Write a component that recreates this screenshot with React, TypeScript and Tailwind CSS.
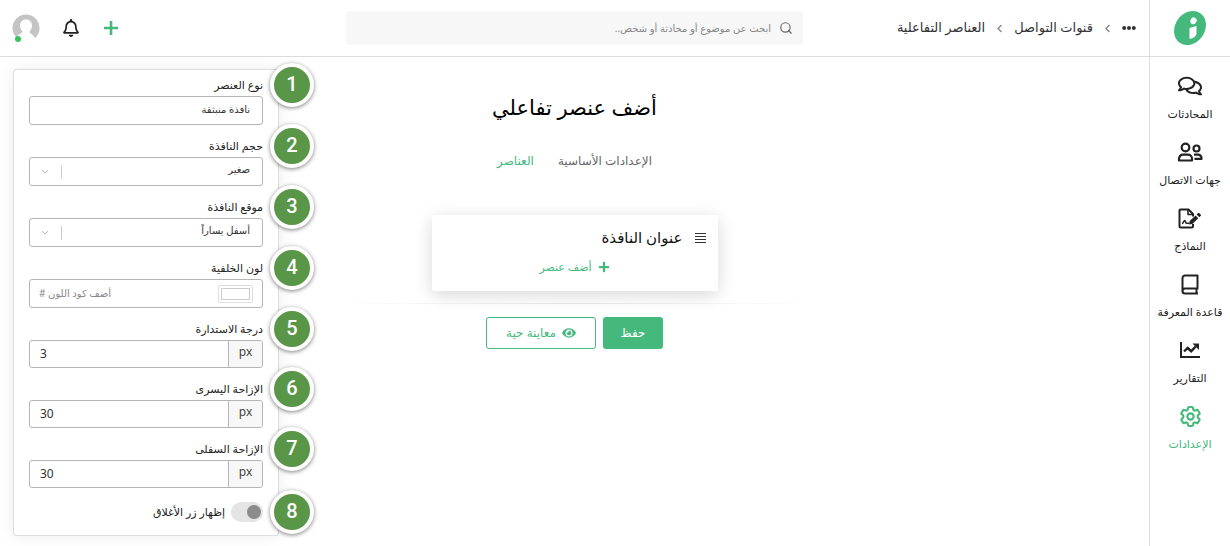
import React, { useState } from 'react';
import { Search } from 'lucide-react';
import { FaRegBell, FaRegComments, FaPlus, FaEye, FaChevronLeft, FaEllipsisH } from 'react-icons/fa';

interface NavItem {
  id: string;
  label: string;
  icon: React.ReactNode;
  active?: boolean;
}

interface FieldProps {
  id: string;
  step: number;
  label: string;
  children: React.ReactNode;
}

const Logo = () => (
  <svg viewBox="0 0 34 36" className="h-9 w-[34px]" aria-hidden="true">
    <ellipse cx="17" cy="18" rx="14.8" ry="18" transform="rotate(35 17 18)" fill="#45b97c" />
    <ellipse cx="20.5" cy="10.8" rx="3" ry="3.5" transform="rotate(25 20.5 10.8)" fill="#fff" />
    <path d="M16.5 18 23.5 16V23.5C23 26.5 20.5 28.5 16.5 29Z" fill="#fff" />
  </svg>
);

const UsersIcon = () => (
  <svg viewBox="0 0 26 20" className="h-5 w-[26px]" fill="none" stroke="currentColor" strokeWidth="2.2" strokeLinejoin="round" aria-hidden="true">
    <circle cx="8.5" cy="5.5" r="3.8" />
    <path d="M2 18.5v-1.8a4 4 0 0 1 4-4h5a4 4 0 0 1 4 4v1.8Z" />
    <circle cx="19.5" cy="6.5" r="3" />
    <path d="M17 12.6h4a3.5 3.5 0 0 1 3.5 3.5v.8h-7" />
  </svg>
);

const FormIcon = () => (
  <svg viewBox="0 0 24 21" className="h-[21px] w-6" fill="none" stroke="currentColor" strokeWidth="2" strokeLinejoin="round" aria-hidden="true">
    <path d="M15 8.5V6l-4.5-4.5H2.5a1 1 0 0 0-1 1v16a1 1 0 0 0 1 1H14a1 1 0 0 0 1-1V16" />
    <path d="M10 2v4.500h4.500" strokeWidth="1.6" />
    <path d="M4 15.5c1.500 0 1.700-3 2.700-3s.7 2.800 1.800 2.800H11" strokeWidth="1.6" />
    <path d="m11 16.500.6-3.500 6-5.600 2.700 2.800-5.900 5.700Z" fill="currentColor" stroke="none" />
    <path d="m18.600 6.500 1.300-1.200c.5-.5 1.200-.4 1.700.1l1 1c.5.500.5 1.200 0 1.700l-1.300 1.200Z" fill="currentColor" stroke="none" />
  </svg>
);

const BookIcon = () => (
  <svg viewBox="0 0 18 21" className="h-[21px] w-[18px]" fill="none" stroke="currentColor" strokeWidth="2" strokeLinejoin="round" aria-hidden="true">
    <path d="M16.500 14.500H4a2.500 2.500 0 0 0-2.500 2.500V4A2.500 2.500 0 0 1 4 1.500h12.500Z" />
    <path d="M1.500 17A2.500 2.500 0 0 0 4 19.500h13M15.500 14.500v5" />
  </svg>
);

const ChartIcon = () => (
  <svg viewBox="0 0 22 18" className="h-[18px] w-[22px]" fill="none" stroke="currentColor" strokeWidth="2" aria-hidden="true">
    <path d="M2 1v15h19" />
    <path d="m5 10.500 3.700-3.500 3.500 3.200 4.500-4.700" strokeWidth="2.400" />
    <path d="M13.500 2.500H20v6.500Z" fill="currentColor" stroke="none" />
  </svg>
);

const GearIcon = () => (
  <svg viewBox="2 2 20 20" className="h-[21px] w-[21px]" fill="none" stroke="currentColor" strokeWidth="2" strokeLinejoin="round" aria-hidden="true">
    <path d="M9.600 3.900c.1-.5.500-.9 1.100-.9h2.600c.6 0 1 .4 1.100.9l.2 1.300c.1.400.3.700.6.900l.3.100c.3.200.7.200 1.100.1l1.200-.5c.5-.2 1.100 0 1.400.5l1.300 2.200c.3.500.2 1.100-.3 1.400l-1 .8c-.3.300-.4.600-.4 1v.6c0 .4.100.7.400 1l1 .8c.5.300.6.900.3 1.400l-1.300 2.200c-.3.500-.9.700-1.400.5l-1.200-.5c-.4-.1-.8-.1-1.100.1l-.3.100c-.3.200-.5.500-.6.900l-.2 1.300c-.1.500-.5.900-1.100.9h-2.600c-.6 0-1-.4-1.100-.9l-.2-1.300c-.1-.4-.3-.7-.6-.9l-.3-.1c-.3-.2-.7-.2-1.100-.1l-1.200.5c-.5.200-1.100 0-1.400-.5l-1.300-2.200c-.3-.5-.2-1.100.3-1.400l1-.8c.3-.3.400-.6.400-1v-.6c0-.4-.1-.7-.4-1l-1-.8c-.5-.3-.6-.9-.3-1.400l1.300-2.200c.3-.5.900-.7 1.400-.5l1.200.5c.4.100.8.100 1.100-.1l.3-.1c.3-.2.5-.5.6-.9Z" />
    <circle cx="12" cy="12" r="3" />
  </svg>
);

const navItems: NavItem[] = [
  { id: 'chats', label: 'المحادثات', icon: <FaRegComments size={24} /> },
  { id: 'contacts', label: 'جهات الاتصال', icon: <UsersIcon /> },
  { id: 'forms', label: 'النماذج', icon: <FormIcon /> },
  { id: 'kb', label: 'قاعدة المعرفة', icon: <BookIcon /> },
  { id: 'reports', label: 'التقارير', icon: <ChartIcon /> },
  { id: 'settings', label: 'الإعدادات', icon: <GearIcon />, active: true },
];

const StepBadge = ({ step }: { step: number }) => (
  <span className="absolute -top-[11px] -right-[51px] flex h-11 w-11 items-center justify-center rounded-full border-4 border-white bg-[#5a9647] pb-[2px] font-['Roboto','Liberation_Sans',sans-serif] text-xl font-medium text-white shadow-[0_1px_4px_rgba(0,0,0,0.5)]">
    {step}
  </span>
);

const Field: React.FC<FieldProps> = ({ id, step, label, children }) => (
  <div className="relative mb-[10px]">
    <label htmlFor={id} className="block text-[11px] leading-[22px] text-[#222]">{label}</label>
    {children}
    <StepBadge step={step} />
  </div>
);

const SelectBox = ({ id, value }: { id: string; value: string }) => (
  <div className="relative">
    <select id={id} className="block h-[29px] w-full appearance-none rounded-[3px] border border-[#b5b5b5] bg-white px-3 pb-1 text-[10px] text-[#333]">
      <option>{value}</option>
    </select>
    <span className="pointer-events-none absolute inset-y-0 left-3 flex items-center gap-3">
      <span className="h-[14px] w-px bg-[#ccc]" />
      <svg viewBox="0 0 8 6" className="h-[6px] w-2" fill="none" stroke="#bbb" aria-hidden="true">
        <path d="m1 1 3 3 3-3" />
      </svg>
    </span>
  </div>
);

const PixelInput = ({ id, initial }: { id: string; initial: string }) => {
  const [value, setValue] = useState(initial);

  return (
    <div className="flex h-7 overflow-hidden rounded-[3px] border border-[#b5b5b5]">
      <span className="w-[34px] border-l border-[#b5b5b5] bg-[#f7f7f7] text-center text-xs leading-[22px] text-[#444]">px</span>
      <input
        id={id}
        dir="ltr"
        value={value}
        onChange={(e) => setValue(e.target.value)}
        className="min-w-0 flex-1 px-[10px] text-xs text-[#333] outline-none"
      />
    </div>
  );
};

const SettingsPanel = () => {
  const [showClose, setShowClose] = useState(true);

  return (
    <aside className="mt-3 ml-[13px] w-[266px] justify-self-end self-start rounded-[3px] border border-[#ddd] bg-white px-[15px] pt-1 pb-3 shadow-[0_0_16px_rgba(0,0,0,0.08)]">
      <Field id="type" step={1} label="نوع العنصر">
        <input id="type" defaultValue="نافذة منبثقة" className="block h-[29px] w-full rounded-[3px] border border-[#b5b5b5] px-3 pb-1 text-[10px] text-[#333]" />
      </Field>
      <Field id="size" step={2} label="حجم النافذة">
        <SelectBox id="size" value="صغير" />
      </Field>
      <Field id="position" step={3} label="موقع النافذة">
        <SelectBox id="position" value="أسفل يساراً" />
      </Field>
      <Field id="background" step={4} label="لون الخلفية">
        <div className="flex h-[29px] items-center rounded-[3px] border border-[#b5b5b5] px-[9px]">
          <button type="button" aria-label="لون الخلفية" className="h-[18px] w-[35px] rounded-[2px] border border-[#ddd] p-[2px]">
            <span className="block h-3 border border-[#ccc] bg-white" />
          </button>
          <input id="background" placeholder="أضف كود اللون #" className="min-w-0 flex-1 text-left text-[10px] outline-none placeholder:text-[#888]" />
        </div>
      </Field>
      <Field id="radius" step={5} label="درجة الاستدارة">
        <PixelInput id="radius" initial="3" />
      </Field>
      <Field id="left-offset" step={6} label="الإزاحة اليسرى">
        <PixelInput id="left-offset" initial="30" />
      </Field>
      <Field id="bottom-offset" step={7} label="الإزاحة السفلى">
        <PixelInput id="bottom-offset" initial="30" />
      </Field>
      <div className="relative mt-[13px]">
        <label className="flex h-[22px] items-center gap-[6px] text-[11px] text-[#222]">
          <input
            type="checkbox"
            checked={showClose}
            onChange={() => setShowClose(!showClose)}
            className="h-5 w-8 appearance-none rounded-full bg-[#e4e4e4] before:mt-[3px] before:mr-[15px] before:block before:h-[14px] before:w-[14px] before:rounded-full before:bg-[#8c8c8c] checked:before:mr-[2px]"
          />
          إظهار زر الأغلاق
        </label>
        <StepBadge step={8} />
      </div>
    </aside>
  );
};

const Header = () => (
  <header className="grid h-[57px] grid-cols-[1fr_457px_1fr] items-center border-b border-[#dcdcdc]">
    <nav className="flex items-center gap-[10px] pr-[13px] text-[13px] whitespace-nowrap text-[#333]">
      <button type="button" aria-label="المزيد"><FaEllipsisH size={14} /></button>
      <FaChevronLeft size={9} className="text-[#888]" />
      <a href="#channels">قنوات التواصل</a>
      <FaChevronLeft size={9} className="text-[#888]" />
      <a href="#elements">العناصر التفاعلية</a>
    </nav>
    <label className="flex h-[34px] items-center gap-2 rounded-[4px] bg-[#f7f7f7] px-[10px]">
      <Search size={14} className="text-[#666]" />
      <input type="search" aria-label="بحث" placeholder="ابحث عن موضوع أو محادثة أو شخص.." className="min-w-0 flex-1 bg-transparent text-[10px] outline-none placeholder:text-[#888]" />
    </label>
    <div className="flex items-center justify-end pl-3">
      <button type="button" aria-label="إضافة" className="ml-6 text-[#45b97c]">
        <svg viewBox="0 0 14 14" className="h-[14px] w-[14px]" stroke="currentColor" strokeWidth="2.600" aria-hidden="true">
          <path d="M7 0v14M0 7h14" />
        </svg>
      </button>
      <button type="button" aria-label="الإشعارات" className="ml-[22px] text-[#222]"><FaRegBell size={18} /></button>
      <button type="button" aria-label="الحساب" className="relative">
        <svg viewBox="0 0 28 28" className="h-7 w-7" aria-hidden="true">
          <circle cx="14" cy="14" r="13.5" fill="#c4c4c4" />
          <path d="M14 5.500c3.800 0 6 2.700 6 6 0 2.500-1 4.500-2.500 5.700.4 2.800 4 2.600 5.500 7.800L19 28H8l-4-3c1.500-5.200 6-5 6.500-7.800C9 16 8 14 8 11.500c0-3.300 2.200-6 6-6Z" fill="#fff" />
        </svg>
        <span className="absolute bottom-0 left-[3px] h-[6px] w-[6px] rounded-full bg-[#34c45a]" />
      </button>
    </div>
  </header>
);

const Editor = () => (
  <section className="flex flex-col items-center">
    <h1 className="mt-[34px] text-[21px] leading-8 text-black">أضف عنصر تفاعلي</h1>
    <div className="mt-7 flex gap-6 text-xs leading-5">
      <button type="button" className="text-[#666]">الإعدادات الأساسية</button>
      <button type="button" className="text-[#45b97c]">العناصر</button>
    </div>
    <div className="mt-11 h-[76px] w-[286px] rounded-[2px] bg-white px-3 pt-[10px] shadow-[0_4px_18px_rgba(0,0,0,0.16)]">
      <div className="flex items-center gap-3 text-[15px] leading-6 text-[#111]">
        <svg viewBox="0 0 11 11" className="h-[11px] w-[11px]" stroke="#333" aria-hidden="true">
          <path d="M0 1.500h11M0 4.500h11M0 7.500h11M0 10.500h11" />
        </svg>
        عنوان النافذة
      </div>
      <button type="button" className="mx-auto mt-2 flex items-center gap-[6px] text-[11px] leading-5 text-[#45b97c]">
        <FaPlus size={12} />
        أضف عنصر
      </button>
    </div>
    <div className="mt-3 h-px w-full bg-linear-to-r from-transparent via-[#e2e2e2] to-transparent" />
    <div className="mt-[13px] flex gap-[7px] text-xs">
      <button type="button" className="h-8 w-[60px] rounded-[3px] bg-[#45b97c] text-white">حفظ</button>
      <button type="button" className="flex h-8 w-[110px] items-center justify-center gap-[6px] rounded-[3px] border border-[#45b97c] text-[#45b97c]">
        <FaEye size={14} />
        معاينة حية
      </button>
    </div>
  </section>
);

const Sidebar = () => (
  <aside className="w-[81px] shrink-0 border-l border-[#dcdcdc]">
    <a href="#home" aria-label="الرئيسية" className="flex h-[57px] items-center justify-center border-b border-[#dcdcdc]">
      <Logo />
    </a>
    <nav className="mt-[17px] flex flex-col">
      {navItems.map((item) => (
        <a
          key={item.id}
          href={`#${item.id}`}
          className={`flex h-[66px] flex-col items-center text-[11px] leading-5 whitespace-nowrap ${item.active ? 'text-[#45b97c]' : 'text-[#222]'}`}
        >
          <span className="mb-[6px] flex h-6 items-center">{item.icon}</span>
          {item.label}
        </a>
      ))}
    </nav>
  </aside>
);

const App: React.FC = () => {
  return (
    <div dir="rtl" className="flex min-h-screen bg-white font-['Noto_Sans','DejaVu_Sans',sans-serif]">
      <Sidebar />
      <div className="min-w-0 flex-1">
        <Header />
        <main className="grid grid-cols-[1fr_464px_1fr]">
          <div />
          <Editor />
          <SettingsPanel />
        </main>
      </div>
    </div>
  );
};

export default App;
